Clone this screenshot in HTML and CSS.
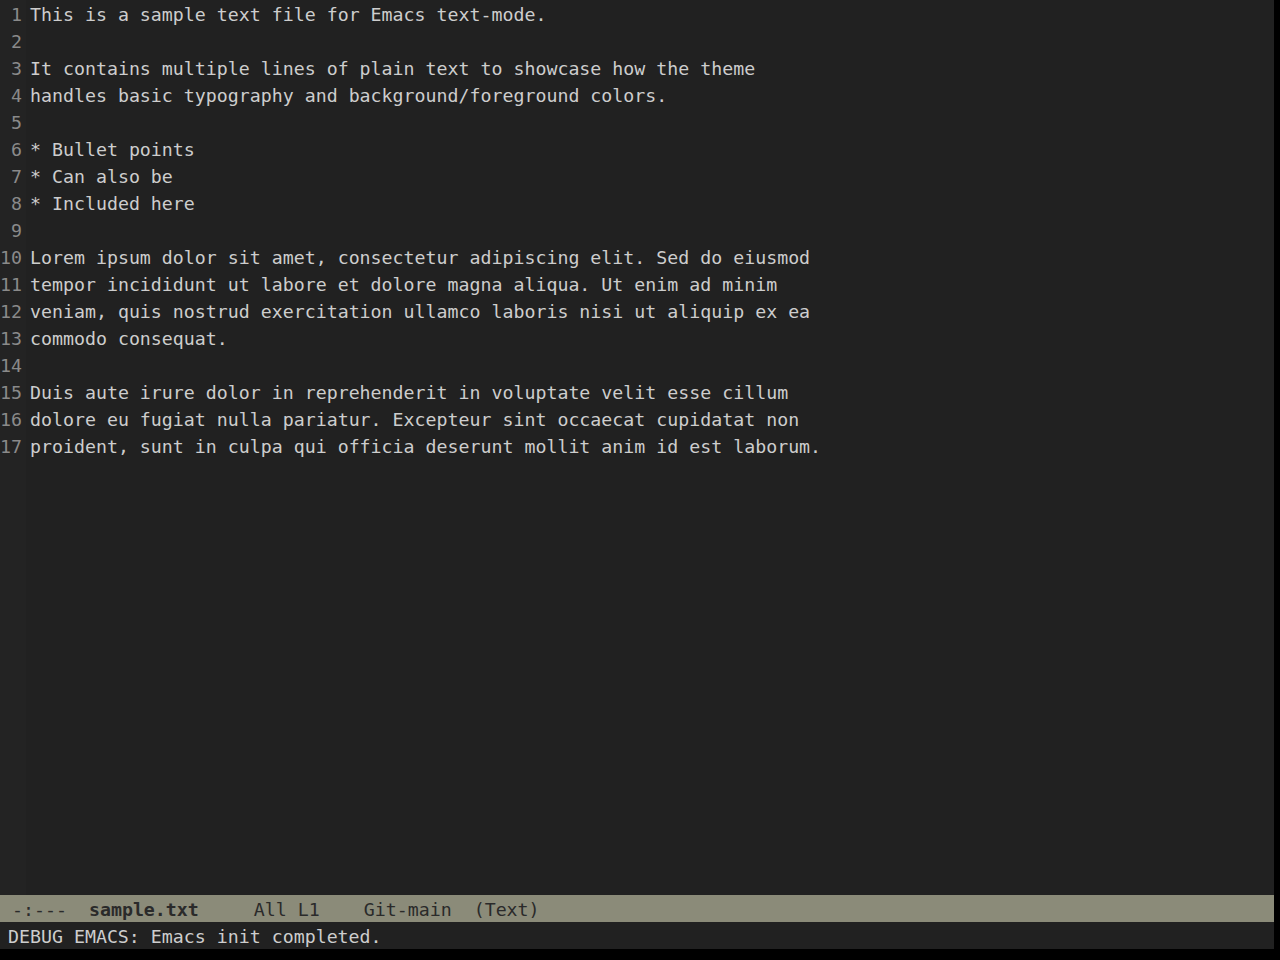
FILE: index.html
```html
<!DOCTYPE html>
<html lang="en">
<head>
  <meta charset="UTF-8" />
  <meta name="viewport" content="width=device-width, initial-scale=1.0"/>
  <title>sample.txt - Emacs</title>
  <link rel="stylesheet" href="styles.css">
</head>
<body>

  <div class="frame">
    <div class="buffer">
      <div class="gutter" id="gutter"></div>
      <div class="text" id="text"></div>
    </div>

    <div class="mode-line">
      <span class="flags">-:---</span>
      <span class="buf-name">sample.txt</span>
      <span class="pos">All L1</span>
      <span class="vc">Git-main</span>
      <span class="mode">(Text)</span>
    </div>

    <div class="echo-area">DEBUG EMACS: Emacs init completed.</div>
  </div>

  <script>
    const lines = [
      'This is a sample text file for Emacs text-mode.',
      '',
      'It contains multiple lines of plain text to showcase how the theme',
      'handles basic typography and background/foreground colors.',
      '',
      '* Bullet points',
      '* Can also be',
      '* Included here',
      '',
      'Lorem ipsum dolor sit amet, consectetur adipiscing elit. Sed do eiusmod',
      'tempor incididunt ut labore et dolore magna aliqua. Ut enim ad minim',
      'veniam, quis nostrud exercitation ullamco laboris nisi ut aliquip ex ea',
      'commodo consequat.',
      '',
      'Duis aute irure dolor in reprehenderit in voluptate velit esse cillum',
      'dolore eu fugiat nulla pariatur. Excepteur sint occaecat cupidatat non',
      'proident, sunt in culpa qui officia deserunt mollit anim id est laborum.'
    ];

    const gutter = document.getElementById('gutter');
    const text = document.getElementById('text');

    // One number and one text row per line
    lines.forEach((line, index) => {
      const num = document.createElement('div');
      num.className = 'line-num';
      num.textContent = index + 1;
      gutter.appendChild(num);

      const row = document.createElement('div');
      row.className = 'line';
      row.textContent = line;
      text.appendChild(row);
    });
  </script>

</body>
</html>
```

FILE: styles.css
```css
html, body {
  margin: 0;
  padding: 0;
  height: 100%;
  background-color: #000;
}

body {
  font-family: "DejaVu Sans Mono", "Liberation Mono", monospace;
  font-size: 18.25px;
  line-height: 27px;
  color: #cdcdcd;
  overflow: hidden;
}

.frame {
  width: 1274px;
  height: 949px;
  display: grid;
  grid-template-rows: 1fr 27px 27px;
  background-color: #212121;
}

.buffer {
  display: flex;
  min-height: 0;
}

.gutter {
  width: 26px;
  flex-shrink: 0;
  padding-top: 1px;
  background-color: #232323;
}

.line-num {
  width: 22px;
  text-align: right;
  color: #8a8a8a;
  height: 27px;
}

.text {
  padding-top: 1px;
  padding-left: 4px;
}

.line {
  height: 27px;
  white-space: pre;
}

.mode-line {
  background-color: #8b8b79;
  color: #2a2a2a;
  padding: 1px 0 0 12px;
  white-space: pre;
  display: flex;
  overflow: hidden;
}

.buf-name {
  font-weight: bold;
  margin-left: 22px;
}

.pos {
  margin-left: 55px;
}

.vc {
  margin-left: 44px;
}

.mode {
  margin-left: 22px;
}

.echo-area {
  padding: 1px 0 0 8px;
  color: #cdcdcd;
  background-color: #212121;
  overflow: hidden;
}
```
